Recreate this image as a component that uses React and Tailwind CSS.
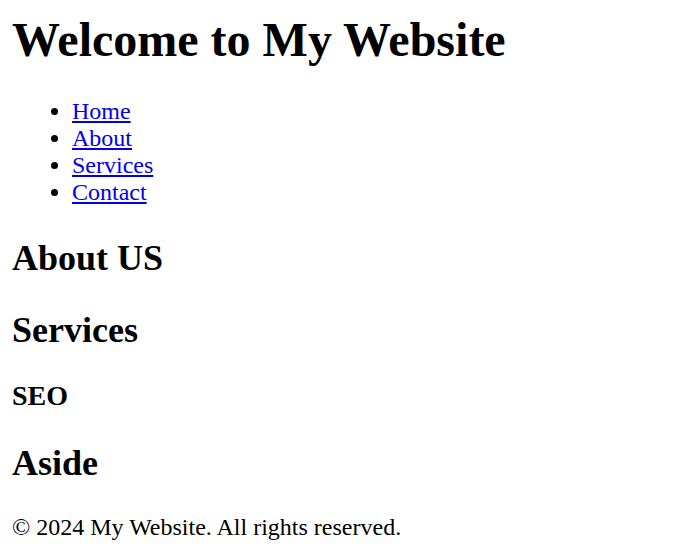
import React from 'react'

const links = ['Home', 'About', 'Services', 'Contact']

export default function App() {
  return (
    <div className="min-h-screen bg-white px-[12px] pt-[12px] text-[24px] leading-[normal] text-black font-['Liberation_Serif','Times_New_Roman',serif]">
      <header>
        <h1 className="mb-[31px] text-[48px] font-bold leading-[normal]">Welcome to My Website</h1>
        <nav>
          <ul className="mb-[31px] list-disc pl-[60px]">
            {links.map((l) => (
              <li key={l}>
                <a href="#" className="text-[#0000ee] underline">{l}</a>
              </li>
            ))}
          </ul>
        </nav>
      </header>
      <main>
        <section>
          <h2 className="my-[30px] text-[36px] font-bold leading-[normal]">About US</h2>
        </section>
        <section>
          <h2 className="mt-[30px] mb-[29px] text-[36px] font-bold leading-[normal]">Services</h2>
          <h3 className="my-[28px] text-[28px] font-bold leading-[normal]">SEO</h3>
        </section>
        <aside>
          <h2 className="my-[30px] text-[36px] font-bold leading-[normal]">Aside</h2>
        </aside>
      </main>
      <footer>
        <p className="my-[24px]">© 2024 My Website. All rights reserved.</p>
      </footer>
    </div>
  )
}
